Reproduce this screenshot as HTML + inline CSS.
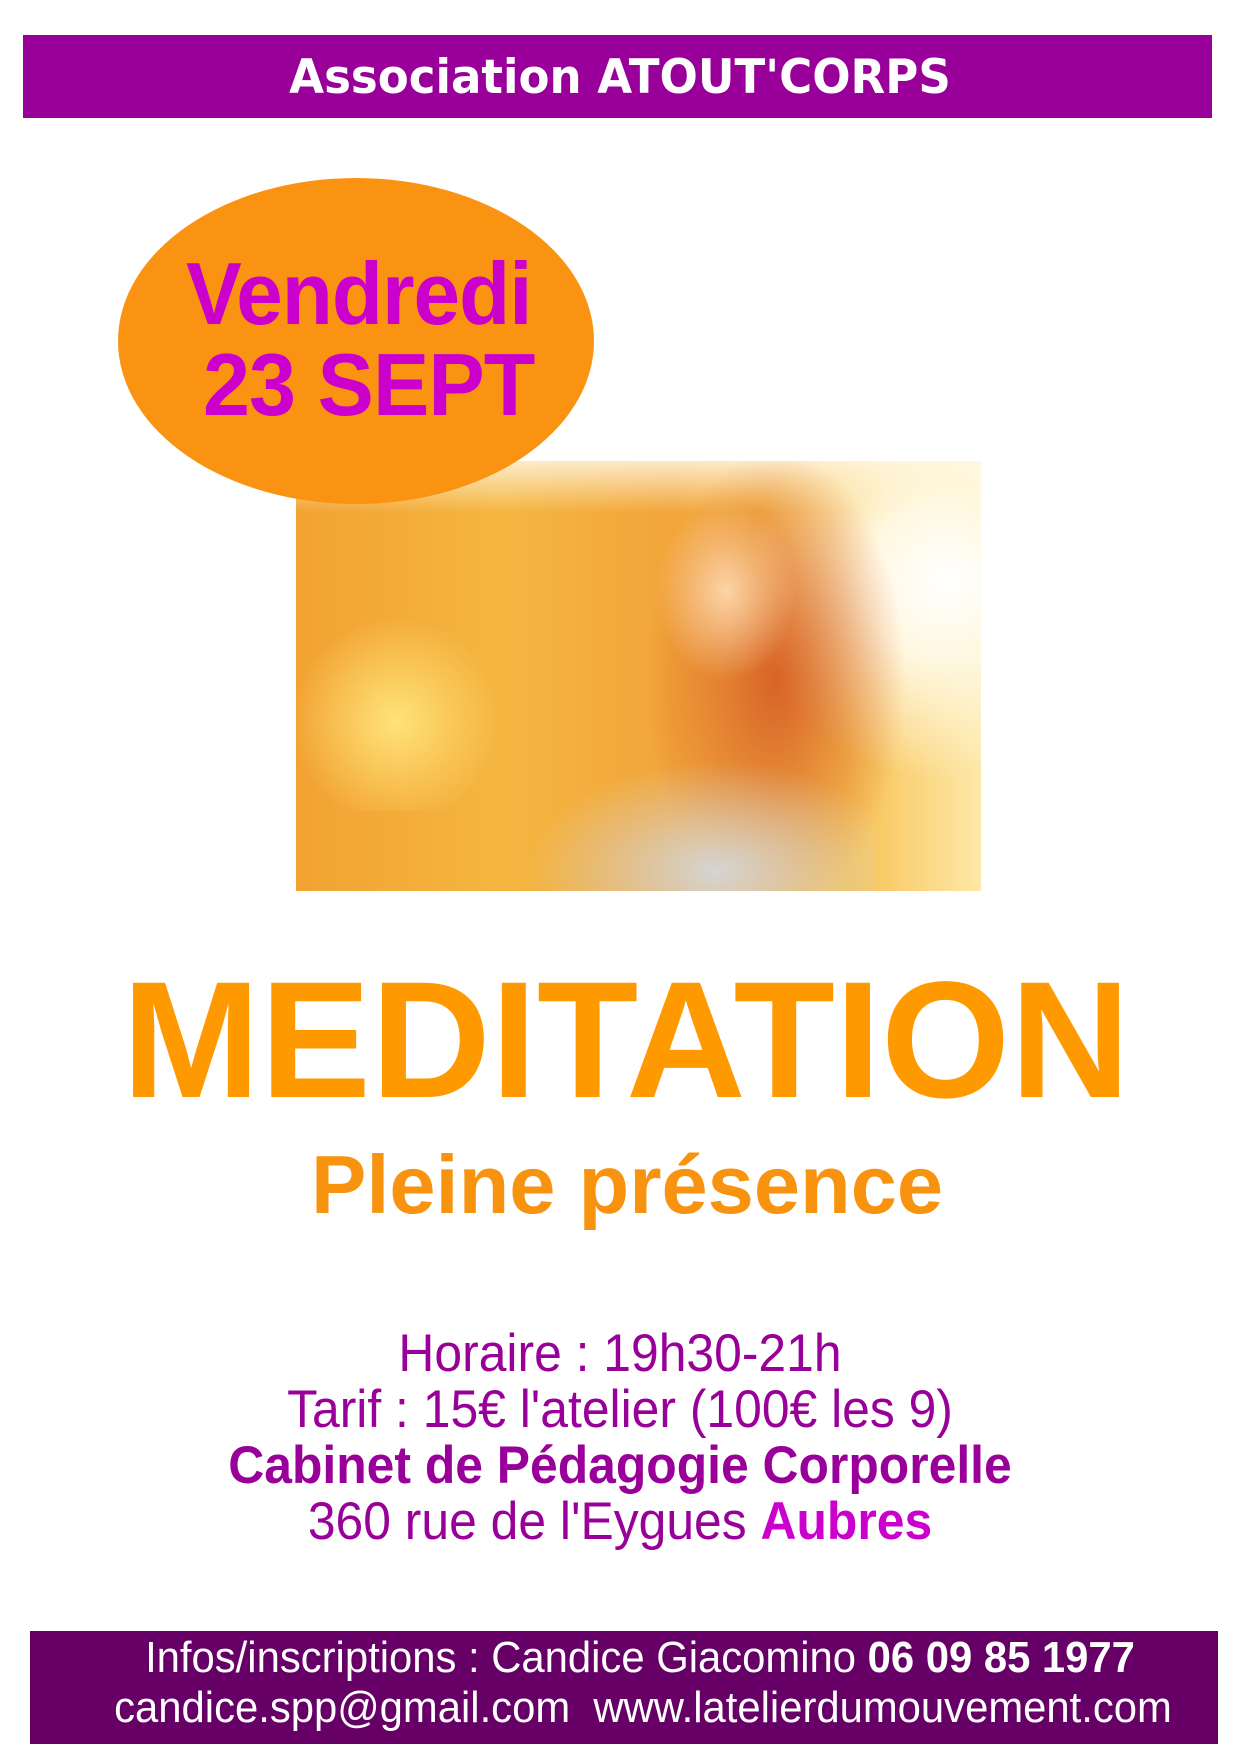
<!DOCTYPE html>
<html><head><meta charset="utf-8"><style>
body{margin:0;width:1240px;height:1754px;background:#fff;position:relative;overflow:hidden;font-family:"Liberation Sans",sans-serif}
.a{position:absolute}
.c{position:absolute;left:0;width:1240px;text-align:center;white-space:nowrap}
</style></head><body>
<div class="a" style="left:23px;top:35px;width:1189px;height:83px;background:#990099"></div>
<div class="c" style="left:0px;top:50px;font-size:47px;font-weight:bold;color:#fff;font-family:'DejaVu Sans','Liberation Sans',sans-serif;transform:scaleX(0.96)">Association ATOUT'CORPS</div>

<div class="a" style="left:296px;top:461px;width:685px;height:430px;overflow:hidden;background:
radial-gradient(ellipse 200px 200px at 650px 120px,#fff 0%,#fff8e0 40%,rgba(255,220,120,0) 100%),
linear-gradient(180deg,rgba(255,250,235,.8) 0%,rgba(255,240,200,0) 12%),
linear-gradient(90deg,#f2a232 0%,#f5b640 30%,#f2a53a 55%,#f7c050 80%,#fde8a8 100%)">
<div class="a" style="left:330px;top:0;width:300px;height:430px;background:radial-gradient(ellipse 130px 230px at 150px 220px,rgba(212,90,35,.9),rgba(212,90,35,0))"></div>
<div class="a" style="left:350px;top:40px;width:160px;height:180px;background:radial-gradient(ellipse 70px 90px at 80px 90px,rgba(255,220,180,.9),rgba(255,220,180,0))"></div>
<div class="a" style="left:220px;top:260px;width:360px;height:170px;background:radial-gradient(ellipse 190px 110px at 200px 150px,rgba(210,215,220,.95),rgba(210,215,220,0))"></div>
<div class="a" style="left:0;top:150px;width:200px;height:200px;background:radial-gradient(circle at 100px 110px,#ffe37a,rgba(255,220,100,0) 70%)"></div>
</div>

<div class="a" style="left:118px;top:178px;width:476px;height:326px;border-radius:50%;background:#fb9312"></div>
<div class="a" style="left:186px;top:243px;font-size:88px;font-weight:bold;color:#cc00cc;white-space:nowrap;letter-spacing:-1px;transform:scaleX(0.95);transform-origin:left">Vendredi</div>
<div class="a" style="left:203px;top:334px;font-size:88px;font-weight:bold;color:#cc00cc;white-space:nowrap;letter-spacing:-1px;transform:scaleX(0.96);transform-origin:left">23 SEPT</div>

<div class="c" style="left:6px;top:958px;font-size:166px;font-weight:bold;color:#ff9900;line-height:1">MEDITATION</div>
<div class="c" style="left:7px;top:1143px;font-size:83px;font-weight:bold;color:#f7930e;line-height:1">Pleine présence</div>

<div class="c" style="top:1327px;font-size:53px;color:#990099;line-height:1;transform:scaleX(0.94)">Horaire : 19h30-21h</div>
<div class="c" style="top:1383px;font-size:53px;color:#990099;line-height:1;transform:scaleX(0.94)">Tarif : 15€ l'atelier (100€ les 9)</div>
<div class="c" style="top:1439px;font-size:53px;font-weight:bold;color:#990099;line-height:1;transform:scaleX(0.94)">Cabinet de Pédagogie Corporelle</div>
<div class="c" style="top:1495px;font-size:53px;color:#990099;line-height:1;transform:scaleX(0.94)">360 rue de l'Eygues <b style="color:#cc00cc">Aubres</b></div>

<div class="a" style="left:30px;top:1631px;width:1188px;height:113px;background:#660066"></div>
<div class="c" style="left:20px;top:1636px;font-size:44px;color:#fff;line-height:1;transform:scaleX(0.95)">Infos/inscriptions : Candice Giacomino <b>06 09 85 1977</b></div>
<div class="c" style="left:23px;top:1686px;font-size:44px;color:#fff;line-height:1;transform:scaleX(0.95)">candice.spp@gmail.com&nbsp; www.latelierdumouvement.com</div>
</body></html>
